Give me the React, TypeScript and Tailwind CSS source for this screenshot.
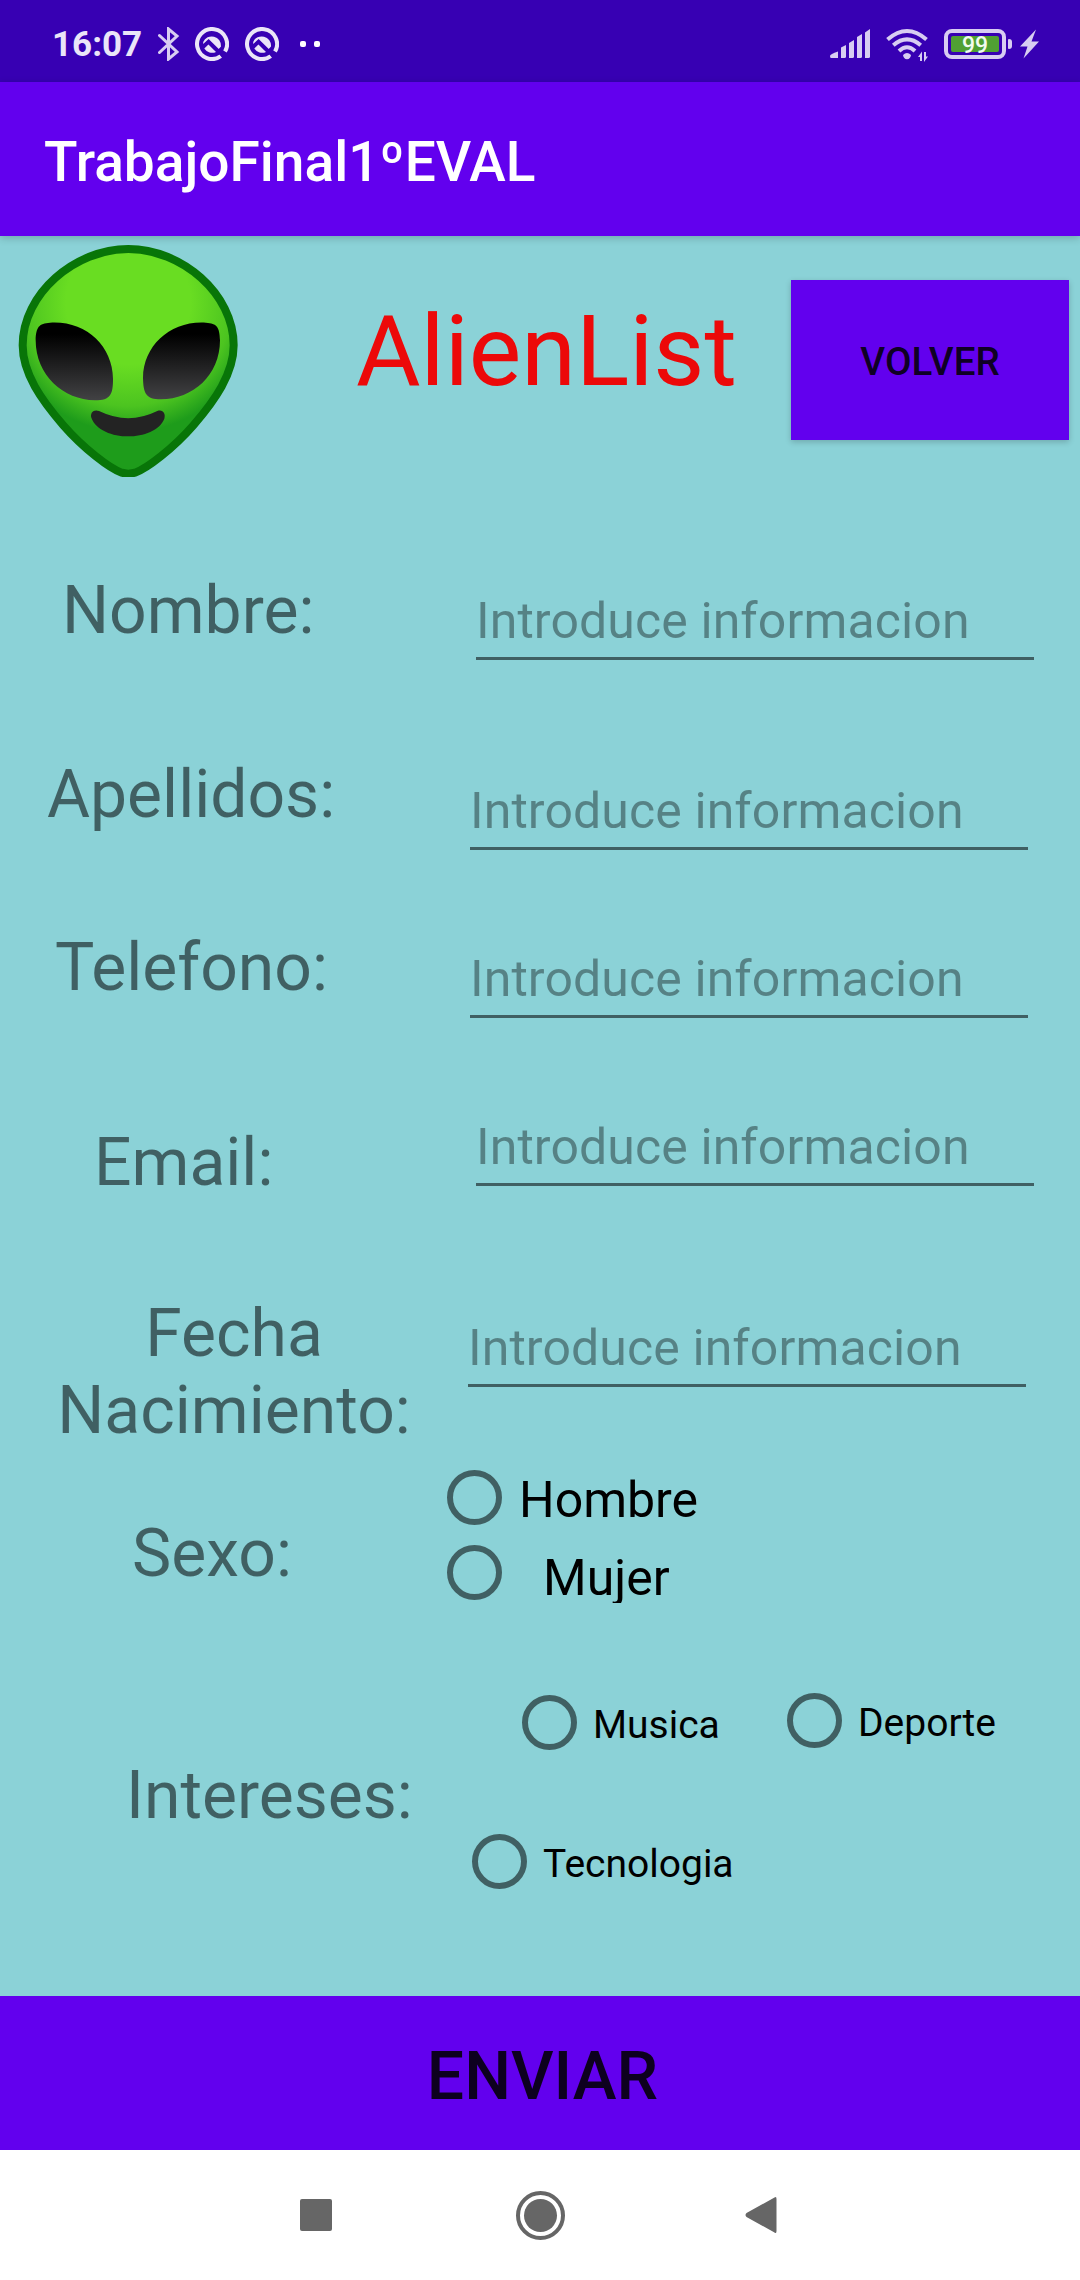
import type { ReactNode } from "react";

function Alien() {
  return (
    <svg className="mt-[9px] ml-[18px] h-[232px] w-[220px] shrink-0" viewBox="54 44 660 696">
      <defs>
        <radialGradient id="skin" gradientUnits="userSpaceOnUse" cx="385" cy="215" r="390">
          <stop offset="0.48" stopColor="#69dd22" />
          <stop offset="0.8" stopColor="#4cc420" />
          <stop offset="1" stopColor="#1e9c1b" />
        </radialGradient>
        <linearGradient id="eye" x1="0" y1="0" x2="0" y2="1">
          <stop offset="0.15" stopColor="#000" />
          <stop offset="1" stopColor="#424244" />
        </linearGradient>
      </defs>
      <path
        d="M385 56C225 56 68 190 68 345C68 430 125 510 190 585C250 654 330 715 365 727Q385 733 405 727C440 715 520 654 580 585C645 510 701 430 701 345C701 190 545 56 385 56Z"
        fill="url(#skin)"
        stroke="#087508"
        strokeWidth="24"
      />
      <path
        d="M150 277C255 270 338 345 339 445C339 490 333 510 285 510C190 509 107 435 107 330C108 290 117 279 150 277Z"
        fill="url(#eye)"
      />
      <path
        d="M618 277C513 270 430 345 429 442C430 488 437 507 483 507C578 507 660 435 660 330C659 290 651 279 618 277Z"
        fill="url(#eye)"
      />
      <path
        d="M297 542Q385 585 472 542C488 536 498 549 493 565C480 600 430 618 384 618C338 618 288 600 274 562C270 547 281 536 297 542Z"
        fill="#232323"
      />
    </svg>
  );
}

function QIcon() {
  return (
    <svg className="h-[34px] w-[34px]" viewBox="0 0 34 34" fill="none">
      <path d="M25.8 29.2A15 15 0 1 1 30 24.6" stroke="#ebe5f8" strokeWidth="4" />
      <path d="M8.2 15A9.3 9.3 0 0 1 26 19.5L23.8 22L13.6 12L8.2 17Z" fill="#ebe5f8" />
      <path d="M9.3 21.5L13.4 17.6L21 25A9.3 9.3 0 0 1 9.3 21.5Z" fill="#ebe5f8" />
      <path d="M23 23L30 30" stroke="#3700b3" strokeWidth="4" />
    </svg>
  );
}

function StatusBar() {
  return (
    <div className="flex h-[82px] items-start bg-[#3700b3] text-[#ebe5f8]">
      <span className="mt-[25px] ml-[52px] w-[106px] text-[35px] leading-[40px] font-bold whitespace-nowrap">16:07</span>
      <svg className="mt-[27px] h-[34px] w-[22px]" viewBox="0 0 22 34" fill="none" stroke="#d8cdf2" strokeWidth="3">
        <path d="M1.5 8.5L19 25L10.5 32V2L19 9L1.5 25.5" strokeLinecap="round" />
      </svg>
      <div className="mt-[27px] ml-[15px] flex gap-4">
        <QIcon />
        <QIcon />
      </div>
      <div className="mt-[41px] ml-[21px] flex gap-2">
        <span className="size-[6px] rounded-[2px] bg-white" />
        <span className="size-[6px] rounded-[2px] bg-white" />
      </div>
      <svg className="mt-[28px] mr-[16px] ml-auto h-[34px] w-[98px]" viewBox="0 0 98 34" fill="#d8cdf2">
        <path d="M0 28Q0 26 8 23.5V30H1Q0 30 0 28Z" />
        <path d="M11 30V19.5L16 17V28.5Q16 30 14.500 30Z" />
        <path d="M19 30V15L24 12V28.500Q24 30 22.500 30Z" />
        <path d="M27 30V9L32 6V28.500Q32 30 30.500 30Z" />
        <path d="M35 30V4.500L40 1V28.500Q40 30 38.500 30Z" />
        <g fill="none" stroke="#d8cdf2" strokeWidth="4">
          <path d="M57.500 11.500Q77 -5.500 96.500 11.500" />
          <path d="M63.300 17.300Q77 5.500 90.700 17.300" />
          <path d="M69 23Q77 15.500 85 23" />
        </g>
        <path d="M73 27Q77 23 81 27Q80.500 31 77 31.300Q73.500 31 73 27Z" />
        <path d="M92 33V23.500L88 29H90V33ZM94 24V34L98 28.500H96V24Z" />
      </svg>
      <div className="mt-[29px] mr-[8px] flex items-center gap-[2px]">
        <div className="h-[30px] w-[62px] rounded-[8px] border-4 border-[#d8cdf2] p-[3px]">
          <div className="flex h-full items-center justify-center rounded-[2px] bg-[#50a033] pt-[2px] text-[23px] leading-none font-medium text-[#f2fbef]">
            99
          </div>
        </div>
        <span className="h-[10px] w-[4px] rounded-r-[3px] rounded-l-[1px] bg-[#d8cdf2]" />
      </div>
      <svg className="mt-[29px] mr-[41px] h-[30px] w-[19px]" viewBox="0 0 19 30" fill="#d8cdf2">
        <path d="M16 0.500L0 17.500H7.500L3.500 29.500L19 12.500H11.500Z" />
      </svg>
    </div>
  );
}

function Label({ className, children }: { className: string; children: ReactNode }) {
  return (
    <div className={`shrink-0 text-[66px] leading-[77px] whitespace-nowrap text-black/54 ${className}`}>{children}</div>
  );
}

function Field({ className }: { className: string }) {
  return (
    <div className={`h-[68px] w-[558px] shrink-0 border-b-[3px] border-black/54 ${className}`}>
      <div className="text-[50px] leading-[58px] tracking-[0.1px] whitespace-nowrap text-black/38">
        Introduce informacion
      </div>
    </div>
  );
}

function Ring() {
  return <span className="size-[55px] shrink-0 rounded-full border-[6px] border-black/54" />;
}

function SmallRadio({ text, className }: { text: string; className: string }) {
  return (
    <div className={`flex gap-4 ${className}`}>
      <Ring />
      <span className="pt-[8px] text-[39px] leading-[45px]">{text}</span>
    </div>
  );
}

export default function App() {
  return (
    <div className="flex h-[2280px] w-[1080px] flex-col overflow-hidden bg-[#8bd2d7] font-['Roboto',sans-serif] text-black">
      <StatusBar />
      <header className="z-10 h-[154px] shrink-0 bg-[#6200ee] pt-12 pl-[44px] text-[55px] leading-[64px] font-medium tracking-[0.03px] text-white shadow-[0_2px_8px_rgba(0,0,0,0.2)]">
        TrabajoFinal1ºEVAL
      </header>

      <main className="flex h-[1760px] shrink-0 flex-col">
        <div className="flex h-[304px] items-start">
          <Alien />
          <div className="mt-[57px] ml-[118px] w-[380px] text-[99px] leading-[116px] whitespace-nowrap text-[#ec0909]">
            AlienList
          </div>
          <button className="mt-11 ml-[55px] h-[160px] w-[278px] bg-[#6200ee] pt-[2px] text-[38.5px] leading-[45px] font-medium text-black/87 shadow-[0_2px_6px_rgba(0,0,0,0.2)]">
            VOLVER
          </button>
        </div>
        <div className="flex h-[200px] items-start">
          <Label className="mt-8 w-[476px] pl-[62px]">Nombre:</Label>
          <Field className="mt-[52px]" />
        </div>
        <div className="flex h-[180px] items-start">
          <Label className="mt-4 w-[470px] pl-[47px]">Apellidos:</Label>
          <Field className="mt-[42px]" />
        </div>
        <div className="flex h-[160px] items-start">
          <Label className="mt-[9px] w-[470px] pl-[55px]">Telefono:</Label>
          <Field className="mt-[30px]" />
        </div>
        <div className="flex h-[200px] items-start">
          <Label className="mt-11 w-[476px] pl-[94px]">Email:</Label>
          <Field className="mt-[38px]" />
        </div>
        <div className="flex h-[170px] items-start">
          <Label className="mt-[15px] mr-[56px] ml-[56px] w-[356px] text-center">
            Fecha
            <br />
            Nacimiento:
          </Label>
          <Field className="mt-[39px]" />
        </div>
        <div className="flex h-[200px] items-start">
          <Label className="mt-[65px] w-[447px] pl-[132px]">Sexo:</Label>
          <div className="mt-[19.5px] flex flex-col gap-5 text-[50px] leading-[58px]">
            <div className="flex h-[55px]">
              <Ring />
              <span className="ml-[17px] pt-px">Hombre</span>
            </div>
            <div className="flex h-[58px] overflow-hidden">
              <Ring />
              <span className="ml-[41px] pt-[4px]">Mujer</span>
            </div>
          </div>
        </div>
        <div className="flex h-[346px] items-start">
          <Label className="mt-[107px] w-[472px] pl-[126px]">Intereses:</Label>
          <div className="mt-[43px] flex flex-col gap-[84px]">
            <div className="flex items-start">
              <SmallRadio text="Musica" className="mt-[2px] ml-[50px] w-[265px]" />
              <SmallRadio text="Deporte" className="" />
            </div>
            <SmallRadio text="Tecnologia" className="" />
          </div>
        </div>
      </main>

      <button className="h-[154px] shrink-0 bg-[#6200ee] pt-[7px] pl-[5px] text-[66px] leading-[77px] font-medium text-black/87">
        ENVIAR
      </button>

      <nav className="flex h-[130px] shrink-0 items-center bg-white">
        <span className="ml-[300px] size-8 rounded-[2px] bg-[#666]" />
        <svg className="ml-[184px] size-[49px]" viewBox="0 0 49 49">
          <circle cx="24.500" cy="24.500" r="22.500" fill="none" stroke="#666" strokeWidth="4" />
          <circle cx="24.500" cy="24.500" r="16.500" fill="#666" />
        </svg>
        <svg className="ml-[180px] h-[38px] w-[32px]" viewBox="0 0 32 38" fill="#666">
          <path d="M29.500 1.500Q31.500 0 31.500 3V35Q31.500 38 29.500 36.500L1.500 21Q-0.500 19 1.500 17Z" />
        </svg>
      </nav>
    </div>
  );
}
